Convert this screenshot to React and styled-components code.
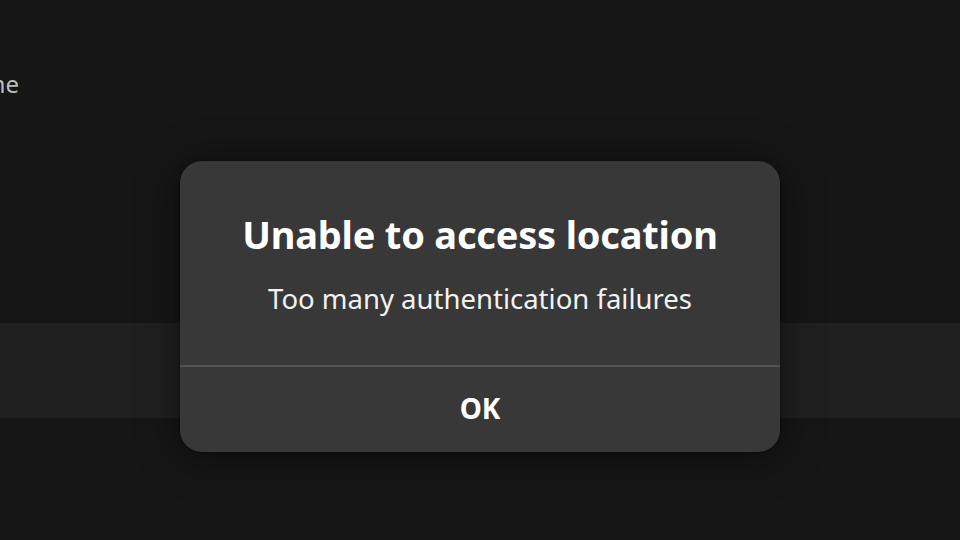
import styled, { createGlobalStyle } from "styled-components"

const Global = createGlobalStyle`
  html, body { margin: 0; padding: 0; background: #161616; }
  body { font-family: "Noto Sans", "Open Sans", sans-serif; }
`

const Page = styled.div`
  position: relative;
  width: 960px;
  height: 540px;
  overflow: hidden;
  background: #161616;
  display: flex;
  flex-direction: column;
`

const Header = styled.div`
  height: 323px;
  padding-top: 69px;
  box-sizing: border-box;
`

const Label = styled.div`
  width: 19px;
  overflow: hidden;
  display: flex;
  justify-content: flex-end;
  color: #bdbdbd;
  font-size: 24px;
  line-height: 30px;
  white-space: nowrap;
`

const Band = styled.div`
  height: 95px;
  background: #202020;
`

const Overlay = styled.div`
  position: absolute;
  inset: 0;
  display: flex;
  justify-content: center;
  align-items: flex-start;
  padding-top: 161px;
`

const Dialog = styled.div`
  width: 600px;
  height: 291px;
  background: #383838;
  border-radius: 22px;
  box-shadow: 0 4px 40px rgba(0, 0, 0, 0.5), 0 0 4px rgba(0, 0, 0, 0.3);
  display: flex;
  flex-direction: column;
  overflow: hidden;
`

const Body = styled.div`
  height: 206px;
  display: flex;
  flex-direction: column;
  align-items: center;
  padding-top: 50px;
  box-sizing: border-box;
  border-bottom: 2px solid #545454;
`

const Title = styled.h2`
  margin: 0;
  color: #ffffff;
  font-size: 38px;
  font-weight: 700;
  line-height: 46px;
  letter-spacing: -0.2px;
`

const Message = styled.p`
  margin: 26px 0 0;
  color: #f2f2f2;
  font-size: 27.5px;
  font-weight: 400;
  line-height: 32px;
`

const Button = styled.button`
  flex: 1;
  border: none;
  background: transparent;
  color: #ffffff;
  font-family: inherit;
  font-size: 28px;
  font-weight: 700;
  padding: 0 0 4px;
  cursor: pointer;
`

export default function App() {
  return (
    <Page>
      <Global />
      <Header>
        <Label>Home</Label>
      </Header>
      <Band />
      <Overlay>
        <Dialog>
          <Body>
            <Title>Unable to access location</Title>
            <Message>Too many authentication failures</Message>
          </Body>
          <Button>OK</Button>
        </Dialog>
      </Overlay>
    </Page>
  )
}
